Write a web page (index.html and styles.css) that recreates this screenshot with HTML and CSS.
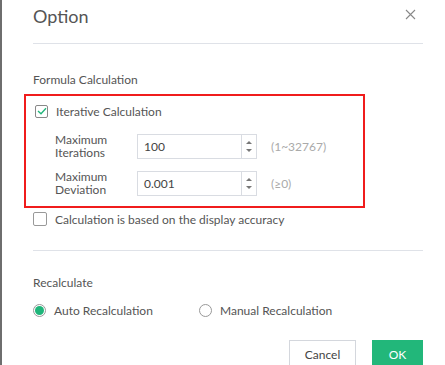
FILE: index.html
```html
<!DOCTYPE html>
<html lang="en">
<head>
    <meta charset="UTF-8">
    <title>Option</title>
    <link rel="stylesheet" href="styles.css">
</head>
<body>

<div class="dialog">
    <div class="dialog-header">
        <span class="dialog-title">Option</span>
        <span class="close-btn">
            <svg width="11" height="11" viewBox="0 0 11 11"><path d="M1 1L10 10M10 1L1 10" stroke="#888" stroke-width="1.1" fill="none"/></svg>
        </span>
    </div>

    <div class="section">
        <div class="section-title">Formula Calculation</div>
        <div class="highlight-box">
            <label class="check-row">
                <span class="checkbox checked">
                    <svg width="10" height="8" viewBox="0 0 10 8"><path d="M1 4L4 6.8L9 1.2" stroke="#1fb57a" stroke-width="1.3" fill="none"/></svg>
                </span>
                Iterative Calculation
            </label>
            <div class="field-row">
                <span class="field-label">Maximum<br>Iterations</span>
                <div class="spin-input">
                    <span class="spin-value">100</span>
                    <span class="spin-arrows"><span class="arrow-up"></span><span class="arrow-down"></span></span>
                </div>
                <span class="field-hint">(1~32767)</span>
            </div>
            <div class="field-row">
                <span class="field-label">Maximum<br>Deviation</span>
                <div class="spin-input">
                    <span class="spin-value">0.001</span>
                    <span class="spin-arrows"><span class="arrow-up"></span><span class="arrow-down"></span></span>
                </div>
                <span class="field-hint">(&ge;0)</span>
            </div>
        </div>
        <label class="check-row accuracy-row">
            <span class="checkbox"></span>
            Calculation is based on the display accuracy
        </label>
    </div>

    <div class="section recalc">
        <div class="section-title">Recalculate</div>
        <div class="radio-group">
            <label class="radio-row first"><span class="radio selected"></span>Auto Recalculation</label>
            <label class="radio-row"><span class="radio"></span>Manual Recalculation</label>
        </div>
    </div>

    <div class="dialog-footer">
        <button class="btn btn-cancel">Cancel</button>
        <button class="btn btn-ok">OK</button>
    </div>
</div>

</body>
</html>
```

FILE: styles.css
```css
html, body {
    margin: 0;
    padding: 0;
    background: #fff;
}
body {
    font-family: Lato, "Open Sans", sans-serif;
    font-size: 12px;
    color: #555;
}
.dialog {
    width: 443px;
    height: 365px;
    border-left: 2px solid #6e6e6e;
    overflow: hidden;
}
.dialog-header {
    display: flex;
    justify-content: space-between;
    align-items: flex-start;
    height: 43px;
    margin: 0 22px 0 31px;
    border-bottom: 1px solid #dfe2e8;
}
.dialog-title {
    font-size: 18px;
    line-height: 32px;
    color: #555;
}
.close-btn {
    display: flex;
    margin-top: 9px;
    margin-right: 7px;
}
.section {
    margin: 0 22px 0 31px;
}
.section-title {
    line-height: 16px;
    padding-top: 28px;
    padding-bottom: 6px;
}
.highlight-box {
    margin-left: -9px;
    width: 328px;
    border: 2px solid #f01c1c;
    padding: 7px 0 10px 9px;
}
.check-row {
    display: flex;
    align-items: center;
    gap: 8px;
    height: 16px;
}
.checkbox {
    width: 11px;
    height: 11px;
    border: 1px solid #888;
    border-radius: 2px;
    display: flex;
    justify-content: center;
    align-items: center;
}
.field-row {
    display: flex;
    align-items: center;
    margin-top: 14px;
    padding-left: 20px;
}
.field-row + .field-row {
    margin-top: 11px;
}
.field-label {
    width: 82px;
    line-height: 13px;
}
.spin-input {
    display: flex;
    width: 118px;
    height: 23px;
    border: 1px solid #d9dce2;
}
.spin-value {
    flex: 1;
    padding-left: 6px;
    line-height: 23px;
    color: #444;
}
.spin-arrows {
    width: 14px;
    border-left: 1px solid #d9dce2;
    display: flex;
    flex-direction: column;
    justify-content: center;
    align-items: center;
    gap: 5px;
}
.arrow-up, .arrow-down {
    width: 0;
    height: 0;
    border-left: 3px solid transparent;
    border-right: 3px solid transparent;
}
.arrow-up {
    border-bottom: 3px solid #777;
}
.arrow-down {
    border-top: 3px solid #777;
}
.field-hint {
    margin-left: 14px;
    color: #aaa;
}
.accuracy-row {
    margin-top: 3px;
}
.accuracy-row .checkbox {
    width: 12px;
    height: 12px;
    border-color: #999;
}
.recalc {
    margin-top: 23px;
    border-top: 1px solid #dfe2e8;
}
.recalc .section-title {
    padding-top: 24px;
    padding-bottom: 11px;
}
.radio-group {
    display: flex;
}
.radio-row {
    display: flex;
    align-items: center;
    gap: 8px;
    height: 16px;
}
.radio-row.first {
    width: 166px;
}
.radio {
    width: 11px;
    height: 11px;
    border: 1px solid #999;
    border-radius: 50%;
    display: flex;
    justify-content: center;
    align-items: center;
}
.radio.selected::after {
    content: "";
    width: 9px;
    height: 9px;
    border-radius: 50%;
    background: #1fb57a;
}
.dialog-footer {
    display: flex;
    justify-content: flex-end;
    gap: 16px;
    margin: 22px 22px 0 0;
}
.btn {
    font-family: inherit;
    font-size: 12px;
    height: 28px;
    padding: 0;
    border-radius: 0;
    cursor: pointer;
}
.btn-cancel {
    width: 67px;
    background: #fff;
    color: #444;
    border: 1px solid #d4d7dd;
}
.btn-ok {
    width: 51px;
    background: #22b77a;
    color: #fff;
    border: 1px solid #22b77a;
}
```
